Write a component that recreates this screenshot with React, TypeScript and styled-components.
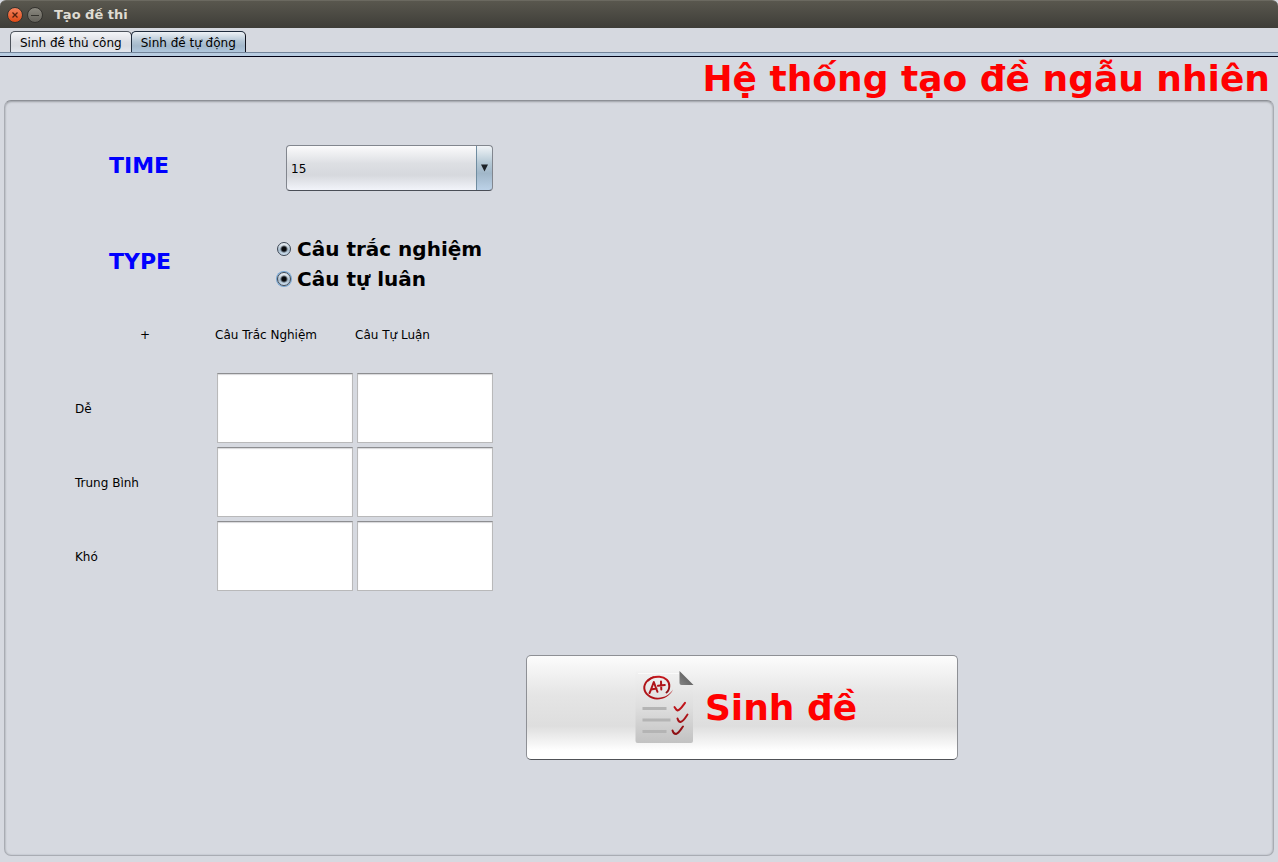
import React from "react";
import styled, { createGlobalStyle } from "styled-components";

const GlobalStyle = createGlobalStyle`
  *, *::before, *::after { box-sizing: border-box; }
  body {
    margin: 0;
    background: #d6d9e0;
    color: #000;
    font: 12px/16px "DejaVu Sans", sans-serif;
  }
  button, input, select { font: inherit; color: inherit; }
`;

const Window = styled.div`
  display: flex;
  flex-direction: column;
  min-height: 100vh;
`;

const TitleBar = styled.header`
  display: flex;
  align-items: center;
  gap: 4px;
  height: 28px;
  padding-left: 7px;
  border-radius: 6px 6px 0 0;
  border-top: 1px solid #6b6960;
  background: linear-gradient(#59574e, #3e3d38);
`;

const WindowButton = styled.button<{ $close?: boolean }>`
  display: grid;
  place-items: center;
  width: 16px;
  height: 16px;
  padding: 0;
  border: 1px solid #33322e;
  border-radius: 50%;
  background: ${(p) =>
    p.$close
      ? "linear-gradient(#f4835e, #df4a16)"
      : "linear-gradient(#8b8980, #64625b)"};
`;

const WindowTitle = styled.div`
  padding-left: 7px;
  color: #dfdbd2;
  font-size: 13px;
  font-weight: bold;
  line-height: 20px;
`;

const TabBar = styled.nav`
  display: flex;
  padding: 3px 10px 0;
`;

const Tab = styled.button<{ $active?: boolean }>`
  height: 22px;
  padding: 2px 9px 0;
  white-space: nowrap;
  border: 1px solid ${(p) => (p.$active ? "#1f2c3d" : "#4d535c")};
  border-right-color: #10121c;
  border-bottom-color: ${(p) => (p.$active ? "#a7bacd" : "#10121c")};
  border-radius: 5px 5px 0 0;
  background: ${(p) =>
    p.$active
      ? "linear-gradient(#eef2f6, #b4c6d5 45%, #a3b8cb 70%, #b1c8de)"
      : "linear-gradient(#f4f5f8, #dcdee4 50%, #d9dce2 70%, #e4e7ee)"};
  & + & { margin-left: -1px; }
`;

const TabLine = styled.div`
  height: 5px;
  margin-top: -1px;
  border-top: 1px solid #73849a;
  border-bottom: 1px solid #000014;
  background: #b9cde2;
`;

const Heading = styled.h1`
  margin: 0;
  padding-right: 8px;
  color: #f00;
  text-align: right;
  font-size: 36px;
  font-weight: bold;
  line-height: 43px;
`;

const Panel = styled.main`
  flex: 1;
  margin: 0 4px 6px;
  padding: 44px 0 40px;
  border: 1px solid #a9acb3;
  border-top-color: #8d9096;
  border-radius: 7px;
  box-shadow: inset 0 1px 2px #9fa2a8, inset 0 0 2px #b4b7bd;
`;

const Field = styled.div`
  display: grid;
  grid-template-columns: 168px 216px;
  align-items: center;
  margin: 0 0 43px 104px;
`;

const FieldName = styled.label`
  padding-bottom: 4px;
  color: #00f;
  font-size: 22px;
  font-weight: bold;
  line-height: 28px;
`;

const ComboBox = styled.div`
  position: relative;
  height: 46px;
  margin: 0 0 0 9px;
`;

const Select = styled.select`
  appearance: none;
  width: 100%;
  height: 100%;
  padding: 2px 20px 0 4px;
  border: 1px solid #82868e;
  border-bottom-color: #4a4e57;
  border-radius: 4px;
  background:
    linear-gradient(#6f8ca0, #6f8ca0) right 15px top / 1px 100% no-repeat,
    linear-gradient(#f0f4f7, #b3c7d4 40%, #a1b7c9 62%, #bcd2e8) right / 15px 100% no-repeat,
    linear-gradient(#fbfbfc, #dddfe3 40%, #d6d8dd 66%, #f2f4fa);
`;

const ComboArrow = styled.svg`
  position: absolute;
  top: 19px;
  right: 4px;
  pointer-events: none;
`;

const RadioList = styled.div`
  display: grid;
  grid-auto-rows: 30px;
`;

const RadioLabel = styled.label`
  display: flex;
  align-items: center;
  gap: 6px;
  font-size: 20px;
  font-weight: bold;
  line-height: 28px;
  white-space: nowrap;
`;

const Radio = styled.input<{ $focused?: boolean }>`
  appearance: none;
  width: 14px;
  height: 14px;
  margin: 0;
  border: 1px solid #3c4653;
  border-radius: 50%;
  background:
    radial-gradient(circle, #08090c 2px, transparent 4px),
    linear-gradient(#eef2f6, #a8bccd 60%, #cfe0f0);
  box-shadow: ${(p) => (p.$focused ? "0 0 0 1px #73a4d1" : "none")};
`;

const Matrix = styled.table`
  width: 420px;
  margin: -40px 0 62px 70px;
  table-layout: fixed;
  border-collapse: collapse;
  tr { height: 74px; }
  th, td { padding: 0; font-weight: normal; text-align: left; }
  th { padding-top: 2px; }
  thead th:first-child { text-align: center; }
`;

const CountInput = styled.input`
  display: block;
  width: 136px;
  height: 70px;
  margin: 0 auto;
  padding: 4px 6px;
  border: 1px solid #b9b9ba;
  border-top-color: #8d8e91;
  border-radius: 0;
  background: #fff;
  box-shadow: inset 0 1px 1px #d8d8da;
`;

const GenerateButton = styled.button`
  display: flex;
  align-items: center;
  justify-content: center;
  gap: 11px;
  width: 432px;
  height: 105px;
  margin-left: 521px;
  padding: 0 0 0 8px;
  border: 1px solid #8e9095;
  border-bottom-color: #505257;
  border-radius: 5px;
  background: linear-gradient(#fcfcfc, #e5e5e5 38%, #dedede 68%, #fff 92%);
  color: #f00;
  font-size: 36px;
  font-weight: bold;
  line-height: 44px;
`;

const PaperIcon = () => (
  <svg width="59" height="76" viewBox="0 0 59 76" fill="none" aria-hidden="true">
    <defs>
      <linearGradient id="sheet" x1="0" y1="0" x2="0" y2="1">
        <stop offset="0" stopColor="#f1f1f1" />
        <stop offset="0.5" stopColor="#dedede" />
        <stop offset="1" stopColor="#c2c2c2" />
      </linearGradient>
      <linearGradient id="fold" x1="1" y1="0" x2="0" y2="1">
        <stop offset="0" stopColor="#4b4b4b" />
        <stop offset="1" stopColor="#858585" />
      </linearGradient>
      <linearGradient id="ink" x1="0" y1="0" x2="0" y2="1">
        <stop offset="0" stopColor="#c5161c" />
        <stop offset="1" stopColor="#8c1014" />
      </linearGradient>
    </defs>
    <path d="M2 1.5H44.5L58 15V71a2 2 0 0 1-2 2H2.500a2 2 0 0 1-2-2V3a1.500 1.500 0 0 1 1.500-1.500Z" fill="url(#sheet)" />
    <path d="M3 3.500H44" stroke="#fafafa" />
    <path d="M44.500 1L58.500 15H46.500a2 2 0 0 1-2-2Z" fill="url(#fold)" />
    <path d="M7.500 38.500H31.500M7.500 50H35.500M7.500 61.500H31.500" stroke="#b4b4b4" strokeWidth="3" />
    <path d="M13 10.500C16 7.500 20 6.500 24.500 6.800C30.500 7.200 34.500 11 34.300 16C34.200 19 33 21.500 31.500 22.500" stroke="url(#ink)" strokeWidth="2" strokeLinecap="round" />
    <path d="M19 6.300C12 8 8 13.500 8.300 18.500C8.800 24.500 15 29 22 29.500C29 29.500 35.500 25.500 38 19.500C35 24.500 29 28 22.500 27.700C16 27.300 10.800 23.500 10.300 18.500C10 14 13 10 19 7.800Z" fill="#b01318" />
    <path d="M14.500 23C16 20 17.500 15.500 18.800 12C20 15 21 18.500 22.500 21.800M16 19.500L21.500 18.500M26 11.500L26.300 19.500M23 15.800L29.800 15" stroke="#b01318" strokeWidth="2" strokeLinecap="round" strokeLinejoin="round" />
    <path d="M39.500 37C40.500 38.500 41 40 42.500 40.500C45.500 40 47.500 36 50 32.800M42.500 48.500C43 50.500 44 52 45.500 52C48.500 51.500 50.500 47.500 52.500 44.500M37.500 60.500C38 62.500 39.500 64 41 64C44 63 46 59 48 56.500" stroke="url(#ink)" strokeWidth="2" strokeLinecap="round" />
  </svg>
);

const kinds = ["Câu Trắc Nghiệm", "Câu Tự Luận"];
const levels = ["Dễ", "Trung Bình", "Khó"];

export default function App() {
  return (
    <Window>
      <GlobalStyle />
      <TitleBar>
        <WindowButton $close aria-label="Đóng">
          <svg width="8" height="8" stroke="#52210f" strokeWidth="1.300" aria-hidden="true">
            <path d="M1.500 1.500l5 5M6.500 1.500l-5 5" />
          </svg>
        </WindowButton>
        <WindowButton aria-label="Thu nhỏ">
          <svg width="8" height="8" stroke="#35342f" strokeWidth="1" aria-hidden="true">
            <path d="M0 4.500h8" />
          </svg>
        </WindowButton>
        <WindowTitle>Tạo đề thi</WindowTitle>
      </TitleBar>
      <TabBar>
        <Tab>Sinh đề thủ công</Tab>
        <Tab $active>Sinh đề tự động</Tab>
      </TabBar>
      <TabLine />
      <Heading>Hệ thống tạo đề ngẫu nhiên</Heading>
      <Panel>
        <Field>
          <FieldName htmlFor="time">TIME</FieldName>
          <ComboBox>
            <Select id="time" defaultValue="15">
              <option>15</option>
              <option>45</option>
              <option>60</option>
            </Select>
            <ComboArrow width="9" height="8" aria-hidden="true">
              <path d="M1 0.500H8L4.500 7.500Z" fill="#1c2126" />
            </ComboArrow>
          </ComboBox>
        </Field>
        <Field>
          <FieldName as="div" id="type">TYPE</FieldName>
          <RadioList role="group" aria-labelledby="type">
            <RadioLabel>
              <Radio type="radio" name="choice" defaultChecked />
              Câu trắc nghiệm
            </RadioLabel>
            <RadioLabel>
              <Radio type="radio" name="essay" defaultChecked $focused />
              Câu tự luân
            </RadioLabel>
          </RadioList>
        </Field>
        <Matrix>
          <thead>
            <tr>
              <th>+</th>
              {kinds.map((kind) => (
                <th key={kind} scope="col">{kind}</th>
              ))}
            </tr>
          </thead>
          <tbody>
            {levels.map((level) => (
              <tr key={level}>
                <th scope="row">{level}</th>
                {kinds.map((kind) => (
                  <td key={kind}>
                    <CountInput type="text" aria-label={`${kind}, ${level}`} />
                  </td>
                ))}
              </tr>
            ))}
          </tbody>
        </Matrix>
        <GenerateButton type="button">
          <PaperIcon />
          Sinh đề
        </GenerateButton>
      </Panel>
    </Window>
  );
}
